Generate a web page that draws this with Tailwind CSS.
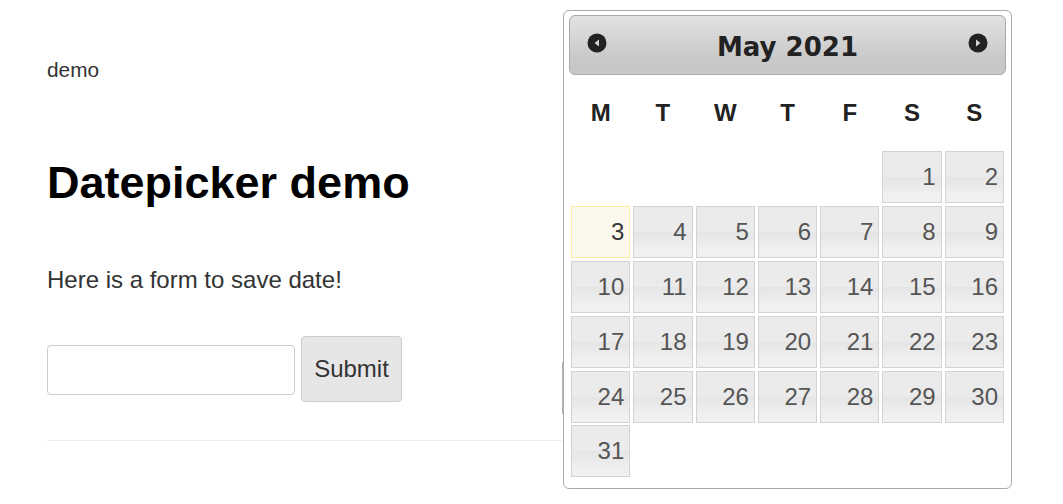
<!DOCTYPE html>
<html lang="en">
<head>
    <meta charset="UTF-8">
    <title>Datepicker demo</title>
    <script src="https://cdn.jsdelivr.net/npm/@tailwindcss/browser@4"></script>
</head>
<body class="relative h-[504px] overflow-hidden bg-white font-['Liberation_Sans',Arial,sans-serif] text-[#333]">
    <!-- Page content -->
    <main class="pt-[58px] pl-[47px]">
        <p class="text-[20.8px] leading-[24px]">demo</p>
        <h1 class="mt-[76px] text-[45px] leading-[50px] font-bold text-black">Datepicker demo</h1>
        <p class="mt-[56px] text-[24px] leading-[32px]">Here is a form to save date!</p>
        <form class="mt-[40px] flex items-center gap-[6px]">
            <input type="text" class="mt-[2px] h-[50px] w-[248px] rounded-[4px] border border-[#ccc] bg-white">
            <button type="button" class="h-[66px] w-[101px] rounded-[4px] border border-[#ccc] bg-[#e6e6e6] text-[24px]">Submit</button>
        </form>
        <hr class="mt-[38px] w-[515px] border-[#eee]">
    </main>
    <div class="absolute top-[362px] left-[562px] h-[52px] w-[2px] bg-[#b5b5b5]"></div>

    <!-- Datepicker popup -->
    <div class="absolute top-[10px] left-[563px] h-[479px] w-[449px] rounded-[6px] border border-[#aaa] bg-white px-[5px] pt-[4px]">
        <div class="flex h-[60px] items-center justify-between rounded-[6px] border border-[#aaa] bg-[linear-gradient(#e2e2e2,#c8c8c8_75%)] px-[17px]">
            <svg class="mb-[4px] size-[20px]" viewBox="0 0 20 20"><circle cx="10" cy="10" r="9.5" fill="#222"/><path d="M12 6.500v7L7.500 10z" fill="#d4d4d4"/></svg>
            <span class="mt-[4px] font-['DejaVu_Sans',sans-serif] text-[26px] leading-none font-bold text-[#222]">May 2021</span>
            <svg class="mb-[4px] size-[20px]" viewBox="0 0 20 20"><circle cx="10" cy="10" r="9.5" fill="#222"/><path d="M8 6.500v7l4.500-3.500z" fill="#d4d4d4"/></svg>
        </div>
        <div class="mt-[22px] ml-[2px] grid w-[433px] grid-cols-7 gap-x-[3px] text-center text-[24px] leading-[32px] font-bold text-[#222]">
            <span>M</span><span>T</span><span>W</span><span>T</span><span>F</span><span>S</span><span>S</span>
        </div>
        <div class="mt-[22px] ml-[2px] grid w-[433px] grid-cols-7 gap-x-[3px] gap-y-[2.9px] text-right text-[24px] text-[#555]">
            <div class="col-start-6 h-[52px] border border-[#d3d3d3] bg-[linear-gradient(#ebebeb_50%,#e5e5e5_50%,#f0f0f0_85%)] pt-[7px] pr-[5px] leading-[36px]">1</div>
            <div class="h-[52px] border border-[#d3d3d3] bg-[linear-gradient(#ebebeb_50%,#e5e5e5_50%,#f0f0f0_85%)] pt-[7px] pr-[5px] leading-[36px]">2</div>
            <div class="h-[52px] border border-[#fcefa1] bg-[#fbf9ee] pt-[7px] pr-[5px] leading-[36px] text-[#363636]">3</div>
            <div class="h-[52px] border border-[#d3d3d3] bg-[linear-gradient(#ebebeb_50%,#e5e5e5_50%,#f0f0f0_85%)] pt-[7px] pr-[5px] leading-[36px]">4</div>
            <div class="h-[52px] border border-[#d3d3d3] bg-[linear-gradient(#ebebeb_50%,#e5e5e5_50%,#f0f0f0_85%)] pt-[7px] pr-[5px] leading-[36px]">5</div>
            <div class="h-[52px] border border-[#d3d3d3] bg-[linear-gradient(#ebebeb_50%,#e5e5e5_50%,#f0f0f0_85%)] pt-[7px] pr-[5px] leading-[36px]">6</div>
            <div class="h-[52px] border border-[#d3d3d3] bg-[linear-gradient(#ebebeb_50%,#e5e5e5_50%,#f0f0f0_85%)] pt-[7px] pr-[5px] leading-[36px]">7</div>
            <div class="h-[52px] border border-[#d3d3d3] bg-[linear-gradient(#ebebeb_50%,#e5e5e5_50%,#f0f0f0_85%)] pt-[7px] pr-[5px] leading-[36px]">8</div>
            <div class="h-[52px] border border-[#d3d3d3] bg-[linear-gradient(#ebebeb_50%,#e5e5e5_50%,#f0f0f0_85%)] pt-[7px] pr-[5px] leading-[36px]">9</div>
            <div class="h-[52px] border border-[#d3d3d3] bg-[linear-gradient(#ebebeb_50%,#e5e5e5_50%,#f0f0f0_85%)] pt-[7px] pr-[5px] leading-[36px]">10</div>
            <div class="h-[52px] border border-[#d3d3d3] bg-[linear-gradient(#ebebeb_50%,#e5e5e5_50%,#f0f0f0_85%)] pt-[7px] pr-[5px] leading-[36px]">11</div>
            <div class="h-[52px] border border-[#d3d3d3] bg-[linear-gradient(#ebebeb_50%,#e5e5e5_50%,#f0f0f0_85%)] pt-[7px] pr-[5px] leading-[36px]">12</div>
            <div class="h-[52px] border border-[#d3d3d3] bg-[linear-gradient(#ebebeb_50%,#e5e5e5_50%,#f0f0f0_85%)] pt-[7px] pr-[5px] leading-[36px]">13</div>
            <div class="h-[52px] border border-[#d3d3d3] bg-[linear-gradient(#ebebeb_50%,#e5e5e5_50%,#f0f0f0_85%)] pt-[7px] pr-[5px] leading-[36px]">14</div>
            <div class="h-[52px] border border-[#d3d3d3] bg-[linear-gradient(#ebebeb_50%,#e5e5e5_50%,#f0f0f0_85%)] pt-[7px] pr-[5px] leading-[36px]">15</div>
            <div class="h-[52px] border border-[#d3d3d3] bg-[linear-gradient(#ebebeb_50%,#e5e5e5_50%,#f0f0f0_85%)] pt-[7px] pr-[5px] leading-[36px]">16</div>
            <div class="h-[52px] border border-[#d3d3d3] bg-[linear-gradient(#ebebeb_50%,#e5e5e5_50%,#f0f0f0_85%)] pt-[7px] pr-[5px] leading-[36px]">17</div>
            <div class="h-[52px] border border-[#d3d3d3] bg-[linear-gradient(#ebebeb_50%,#e5e5e5_50%,#f0f0f0_85%)] pt-[7px] pr-[5px] leading-[36px]">18</div>
            <div class="h-[52px] border border-[#d3d3d3] bg-[linear-gradient(#ebebeb_50%,#e5e5e5_50%,#f0f0f0_85%)] pt-[7px] pr-[5px] leading-[36px]">19</div>
            <div class="h-[52px] border border-[#d3d3d3] bg-[linear-gradient(#ebebeb_50%,#e5e5e5_50%,#f0f0f0_85%)] pt-[7px] pr-[5px] leading-[36px]">20</div>
            <div class="h-[52px] border border-[#d3d3d3] bg-[linear-gradient(#ebebeb_50%,#e5e5e5_50%,#f0f0f0_85%)] pt-[7px] pr-[5px] leading-[36px]">21</div>
            <div class="h-[52px] border border-[#d3d3d3] bg-[linear-gradient(#ebebeb_50%,#e5e5e5_50%,#f0f0f0_85%)] pt-[7px] pr-[5px] leading-[36px]">22</div>
            <div class="h-[52px] border border-[#d3d3d3] bg-[linear-gradient(#ebebeb_50%,#e5e5e5_50%,#f0f0f0_85%)] pt-[7px] pr-[5px] leading-[36px]">23</div>
            <div class="h-[52px] border border-[#d3d3d3] bg-[linear-gradient(#ebebeb_50%,#e5e5e5_50%,#f0f0f0_85%)] pt-[7px] pr-[5px] leading-[36px]">24</div>
            <div class="h-[52px] border border-[#d3d3d3] bg-[linear-gradient(#ebebeb_50%,#e5e5e5_50%,#f0f0f0_85%)] pt-[7px] pr-[5px] leading-[36px]">25</div>
            <div class="h-[52px] border border-[#d3d3d3] bg-[linear-gradient(#ebebeb_50%,#e5e5e5_50%,#f0f0f0_85%)] pt-[7px] pr-[5px] leading-[36px]">26</div>
            <div class="h-[52px] border border-[#d3d3d3] bg-[linear-gradient(#ebebeb_50%,#e5e5e5_50%,#f0f0f0_85%)] pt-[7px] pr-[5px] leading-[36px]">27</div>
            <div class="h-[52px] border border-[#d3d3d3] bg-[linear-gradient(#ebebeb_50%,#e5e5e5_50%,#f0f0f0_85%)] pt-[7px] pr-[5px] leading-[36px]">28</div>
            <div class="h-[52px] border border-[#d3d3d3] bg-[linear-gradient(#ebebeb_50%,#e5e5e5_50%,#f0f0f0_85%)] pt-[7px] pr-[5px] leading-[36px]">29</div>
            <div class="h-[52px] border border-[#d3d3d3] bg-[linear-gradient(#ebebeb_50%,#e5e5e5_50%,#f0f0f0_85%)] pt-[7px] pr-[5px] leading-[36px]">30</div>
            <div class="h-[52px] border border-[#d3d3d3] bg-[linear-gradient(#ebebeb_50%,#e5e5e5_50%,#f0f0f0_85%)] pt-[7px] pr-[5px] leading-[36px]">31</div>
        </div>
    </div>
</body>
</html>
